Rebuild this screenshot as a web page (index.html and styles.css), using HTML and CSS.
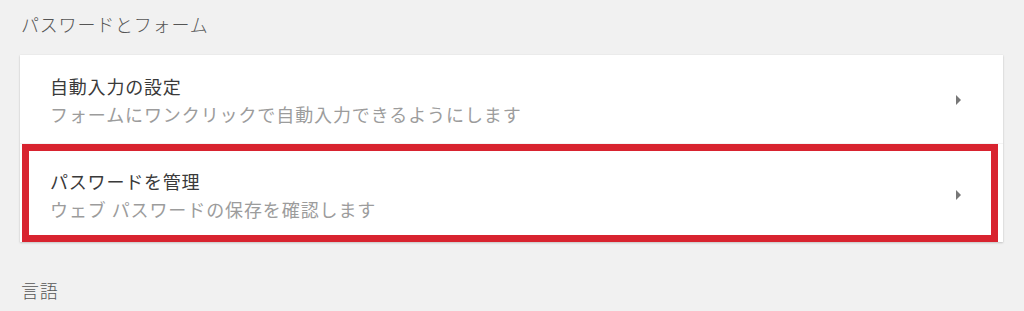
FILE: index.html
```html
<!DOCTYPE html>
<html lang="ja">
<head>
<meta charset="utf-8">
<link rel="stylesheet" href="styles.css">
</head>
<body>
<div class="page">
  <h2 class="section-title">パスワードとフォーム</h2>
  <div class="card">
    <div class="row">
      <div class="text">
        <div class="title">自動入力の設定</div>
        <div class="sub">フォームにワンクリックで自動入力できるようにします</div>
      </div>
      <span class="arrow"></span>
    </div>
    <div class="row highlighted">
      <div class="text">
        <div class="title">パスワードを管理</div>
        <div class="sub">ウェブ パスワードの保存を確認します</div>
      </div>
      <span class="arrow"></span>
    </div>
  </div>
  <h2 class="section-title lang">言語</h2>
</div>
</body>
</html>
```
FILE: styles.css
```css
html, body {
  margin: 0;
  padding: 0;
  background: #f1f1f1;
  font-family: "Noto Sans CJK JP", "Noto Sans", sans-serif;
}
.page {
  padding: 10px 21px 0 20px;
}
.section-title {
  margin: 0 0 0 1px;
  font-size: 18px;
  line-height: 28px;
  font-weight: 300;
  color: #555;
  letter-spacing: 0.8px;
}
.card {
  margin-top: 17px;
  background: #fff;
  box-shadow: 0 1px 2px rgba(0,0,0,0.18), 0 0 1px rgba(0,0,0,0.08);
  display: flex;
  flex-direction: column;
}
.row {
  display: flex;
  align-items: center;
  padding: 17px 42px 15px 30px;
  border-bottom: 1px solid #f4f4f4;
}
.row.highlighted {
  margin: 0 5px 0 2px;
  border: 7px solid #d8232f;
  padding: 16px 30px 12px 21px;
}
.text {
  flex: 1;
}
.title {
  font-size: 18px;
  line-height: 28px;
  color: #3a3a3a;
  font-weight: 400;
  letter-spacing: 0.8px;
}
.sub {
  font-size: 18px;
  line-height: 28px;
  color: #9c9c9c;
  font-weight: 400;
  letter-spacing: 0.9px;
}
.arrow {
  width: 0;
  height: 0;
  border-top: 5px solid transparent;
  border-bottom: 5px solid transparent;
  border-left: 5px solid #777;
}
.section-title.lang {
  margin-top: 34px;
}
```
